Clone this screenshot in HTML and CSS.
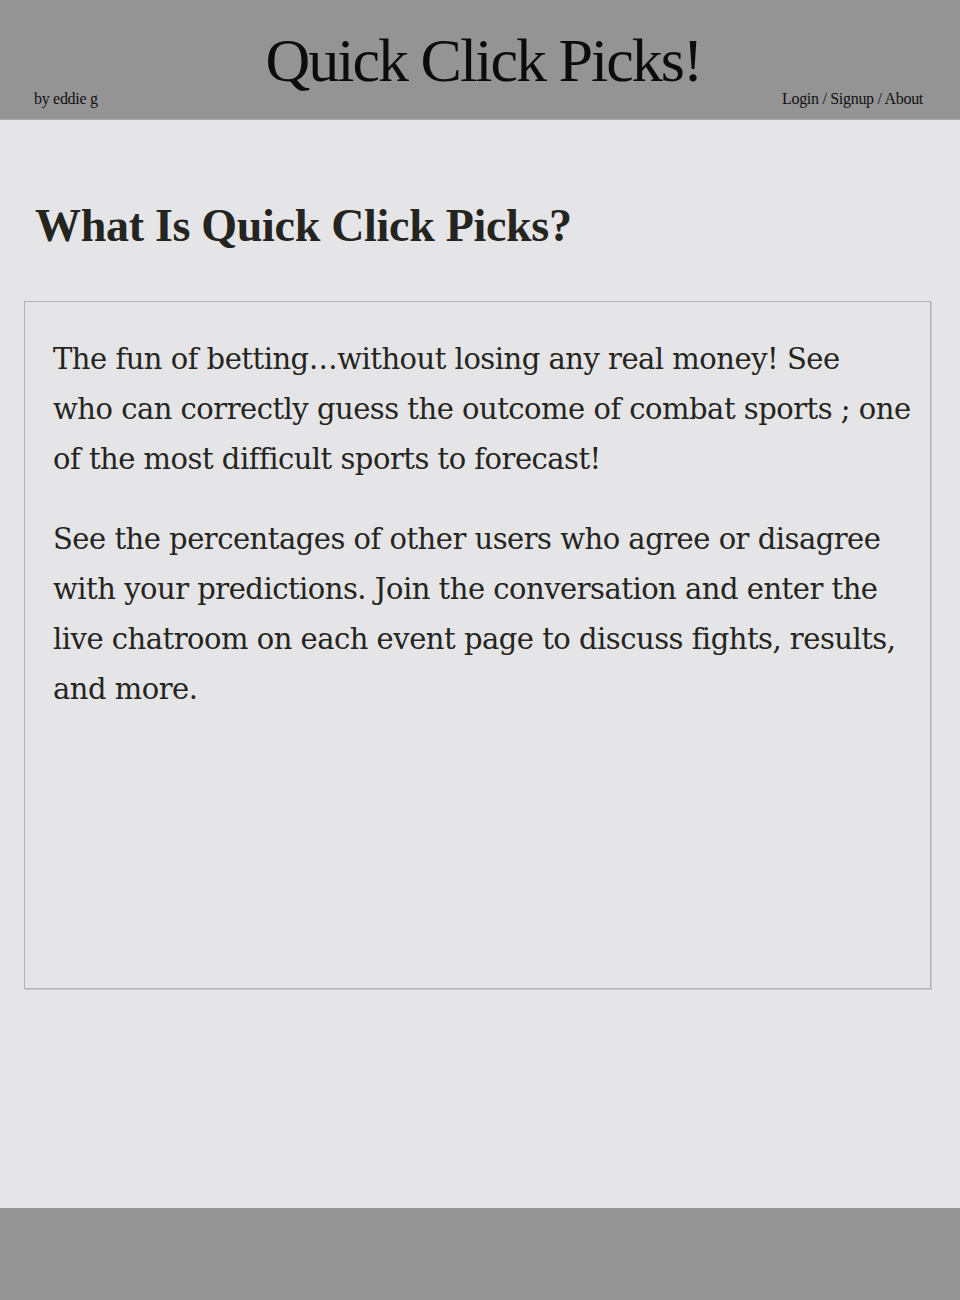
FILE: index.html
```html
<!DOCTYPE html>
<html lang="en">
<head>
<meta charset="utf-8">
<title>Quick Click Picks!</title>
<link rel="stylesheet" href="styles.css">
</head>
<body>
<header class="site-header">
  <div class="byline">by eddie g</div>
  <h1 class="site-title">Quick Click Picks!</h1>
  <nav class="nav-links"><a href="#">Login</a> / <a href="#">Signup</a> / <a href="#">About</a></nav>
</header>
<main class="content">
  <h2 class="page-heading">What Is Quick Click Picks?</h2>
  <section class="info-box">
    <p>The fun of betting…without losing any real money! See<br>who can correctly guess the outcome of combat sports ; one of the most difficult sports to forecast!</p>
    <p>See the percentages of other users who agree or disagree with your predictions. Join the conversation and enter the live chatroom on each event page to discuss fights, results, and more.</p>
  </section>
</main>
<footer class="site-footer"></footer>
</body>
</html>
```
FILE: styles.css
```css
html, body {
  margin: 0;
  padding: 0;
}
body {
  background: #e5e5e7;
  font-family: "DejaVu Serif", "Liberation Serif", serif;
  color: #242420;
}
.site-header {
  height: 120px;
  background: #949494;
  display: grid;
  grid-template-columns: 1fr auto 1fr;
  align-items: end;
  padding: 0 37px 0 34px;
  box-sizing: border-box;
  border-bottom: 1px solid #a8a8a8;
}
.byline, .nav-links {
  font-family: "Liberation Serif", serif;
  font-size: 16px;
  letter-spacing: -0.3px;
  color: #111;
  padding-bottom: 11px;
}
.nav-links { text-align: right; }
.nav-links a { color: #111; text-decoration: none; }
.site-title {
  margin: 0;
  align-self: start;
  padding-top: 28px;
  padding-left: 10px;
  font-family: "Liberation Serif", serif;
  font-weight: normal;
  font-size: 62px;
  line-height: 64px;
  letter-spacing: -2px;
  color: #0c0c0c;
}
.content {
  padding: 81px 29px 219px 24px;
}
.page-heading {
  margin: 0 0 50px 11px;
  font-family: "Liberation Serif", serif;
  font-size: 46px;
  line-height: 50px;
  font-weight: bold;
  letter-spacing: -0.3px;
}
.info-box {
  border: 1px solid #b2b2b2;
  box-shadow: 1px 1px 0 #c8c8c8;
  min-height: 688px;
  box-sizing: border-box;
  padding: 32px 14px 20px 28px;
}
.info-box p {
  margin: 0 0 30px 0;
  font-size: 29px;
  line-height: 50px;
  letter-spacing: -0.5px;
}
.site-footer {
  height: 92px;
  background: #949494;
}
```
